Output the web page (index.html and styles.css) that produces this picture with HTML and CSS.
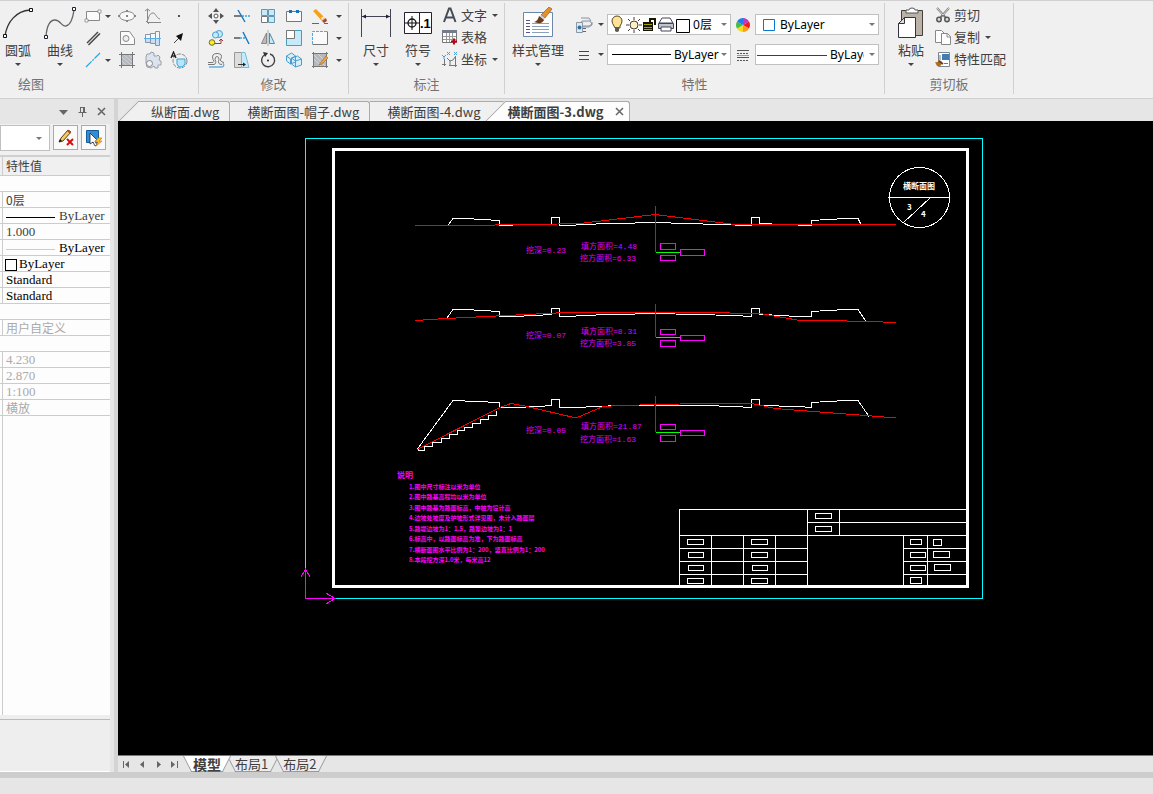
FILE: index.html
```html
<!DOCTYPE html>
<html lang="zh-CN">
<head>
    <meta charset="utf-8">
    <title>横断面图-3.dwg</title>
    <link rel="stylesheet" href="styles.css">
</head>
<body>

<header class="ribbon">
    <section class="group">
        <div class="tools draw">
            <button class="big">
                <svg width="32" height="32"><path d="M3 29C5 15 14 4 28 3" fill="none" stroke="#333" stroke-width="1.3"/><path d="M1.500 27.500h3v3h-3zM27.500 1.500h3v3h-3z" fill="#fff" stroke="#111"/></svg>
                <span>圆弧</span><i class="arrow"></i>
            </button>
            <button class="big">
                <svg width="32" height="32"><path d="M2 29C3 18 6 13 11 13C17 13 17 20 22 19C27 18 29 10 30 3" fill="none" stroke="#666" stroke-width="1.3"/><path d="M.5 28.500h3v3h-3zM28.500 .5h3v3h-3z" fill="#fff" stroke="#223"/></svg>
                <span>曲线</span><i class="arrow"></i>
            </button>
            <div class="icons draw-icons">
                <button class="tool" aria-label="矩形"><svg width="18" height="18"><path d="M2.500 4.500h13v9h-13z" fill="#fafafa" stroke="#888"/><path d="M1 12h3v3H1zM14 3h3v3h-3z" fill="#fff" stroke="#888" stroke-width=".8"/></svg></button>
                <i class="arrow"></i>
                <button class="tool" aria-label="椭圆"><svg width="18" height="18"><ellipse cx="9" cy="9" rx="7.500" ry="4.500" fill="#fafafa" stroke="#888"/><path d="M8 3h2v2H8zM8 8h2v2H8zM8 13h2v2H8zM0 8h2v2H0zM16 8h2v2h-2z" fill="#888"/></svg></button>
                <button class="tool" aria-label="函数"><svg width="18" height="18"><path d="M3.500 2v13.500H17M3 15C5 9 6 6 9 6C12 6 12 11 16 12M1 4l2.500-2L6 4M2 14l3 3" fill="none" stroke="#888"/></svg></button>
                <button class="tool" aria-label="点"><svg width="18" height="18"><path d="M8 8h2v2H8z" fill="#555"/></svg></button>

                <button class="tool" aria-label="双线"><svg width="18" height="18"><path d="M3 14L14 3M4.500 16L16 4.500" stroke="#444" stroke-width="1.400"/><path d="M4 15L15 4" stroke="#ccc"/></svg></button>
                <i></i>
                <button class="tool" aria-label="孔"><svg width="18" height="18"><path d="M2.500 2.500h9l5 7v6h-14z" fill="#fafafa" stroke="#888"/><circle cx="8" cy="9.500" r="3" fill="#eee" stroke="#888"/></svg></button>
                <button class="tool" aria-label="轴"><svg width="18" height="18"><path d="M1.500 5.500h5v8h-5zM6.500 4.500h5v10h-5zM11.500 2.500h4v14h-4z" fill="#c9def0" stroke="#8995a5"/><path d="M2 6h4v3H2zM7 5h4v4H7zM12 3h3v6h-3z" fill="#f4f8fb"/><path d="M0 9.500h17" stroke="#58aee8"/></svg></button>
                <button class="tool" aria-label="箭头"><svg width="18" height="18"><path d="M4 14l6-6" stroke="#444"/><path d="M13 4l-7 3 5 5z" fill="#111"/></svg></button>

                <button class="tool" aria-label="中心线"><svg width="18" height="18"><path d="M2 16L16 2" stroke="#2aa8e0" stroke-width="1.300" stroke-dasharray="8 1 2 1"/></svg></button>
                <i class="arrow"></i>
                <button class="tool" aria-label="剖面线"><svg width="18" height="18"><path d="M3 3h12v9l-3 3H3z" fill="#b5b8bd"/><path d="M3 9l6 6M3 5l10 9M5 3l10 9M10 3l5 5" stroke="#d2d4d8"/><path d="M3.500 1v16M14.500 1v16M1 3.500h16M1 14.500h16" stroke="#777"/></svg></button>
                <button class="tool" aria-label="齿轮"><svg width="18" height="18"><path d="M2 6l1-3 3 0 1-2 3 1 0 3 3 0 1-1 2 2-1 3 2 1 0 4-3 0 0 3-3 0-1-2-3 2-4-1-1-4z" fill="#dde3ee" stroke="#9aa0ab"/><circle cx="5.500" cy="12.500" r="3" fill="#f4f4f4" stroke="#888"/></svg></button>
                <button class="tool" aria-label="局部放大"><svg width="18" height="18"><circle cx="10" cy="10" r="7" fill="none" stroke="#888" stroke-dasharray="4 1"/><path d="M7 8h8v5q-2 4-6 3-3-2-2-8z" fill="#b9e4fa" stroke="#32a7df"/><path d="M1 7l2.500-6L6 7M2 5h3" fill="none" stroke="#222" stroke-width="1.300"/></svg></button>
            </div>
        </div>
        <h2 class="cut">绘图</h2>
    </section>

    <section class="group">
        <div class="tools modify">
            <div class="icons modify-icons">
                <button class="tool" aria-label="移动"><svg width="18" height="18"><path d="M9 1l3 4H6zM9 17l3-4H6zM1 9l4-3v6zM17 9l-4-3v6z" fill="#555"/><circle cx="9" cy="9" r="2" fill="#fff" stroke="#555"/></svg></button>
                <button class="tool" aria-label="修剪"><svg width="18" height="18"><path d="M1 9h7" stroke="#555" stroke-width="1.500"/><path d="M9 9h8" stroke="#32a7df" stroke-width="1.500" stroke-dasharray="2 1"/><path d="M5 3l7 12" stroke="#1873bd" stroke-width="1.400"/></svg></button>
                <button class="tool" aria-label="阵列"><svg width="18" height="18"><path d="M2.500 2.500h6v6h-6zM9.500 2.500h6v6h-6zM9.500 9.500h6v6h-6z" fill="#c5eafa" stroke="#6796ae"/><path d="M2.500 9.500h6v6h-6z" fill="#fff" stroke="#777"/></svg></button>
                <button class="tool" aria-label="打断"><svg width="18" height="18"><path d="M4 4.500H1.500v10h15v-10H14M7 4.500h4" fill="#fafafa" stroke="#777"/><path d="M4 3h3v3H4zM11 3h3v3h-3z" fill="#1873bd"/></svg></button>
                <button class="tool" aria-label="删除"><svg width="18" height="18"><path d="M2 4l3-2 9 9-3 3z" fill="#f5a11b"/><path d="M10 11l3-2 1 1-3 3z" fill="#eee"/><path d="M11 14l4-3 1 3-3 2z" fill="#a34835"/><path d="M1 16.500h7M13 16.500h4" stroke="#666"/></svg></button>
                <i class="arrow"></i>

                <button class="tool" aria-label="复制对象"><svg width="18" height="18"><circle cx="12" cy="5" r="3.500" fill="#c5eafa" stroke="#4b9dd2"/><circle cx="8.500" cy="6" r="3" fill="#c5eafa" stroke="#4b9dd2"/><circle cx="5" cy="13.500" r="2.800" fill="#fff200" stroke="#665"/><path d="M8 14.500h6v-4M12 12l2-2 2 2" fill="none" stroke="#a33"/></svg></button>
                <button class="tool" aria-label="延伸"><svg width="18" height="18"><path d="M1 9h6" stroke="#555" stroke-width="1.500"/><path d="M7 9h5" stroke="#32a7df" stroke-width="1.500" stroke-dasharray="2 1"/><path d="M10 3l6 12" stroke="#1873bd" stroke-width="1.400"/></svg></button>
                <button class="tool" aria-label="镜像"><svg width="18" height="18"><path d="M7.500 4v10.500h-5z" fill="#bbb" stroke="#888"/><path d="M10.500 4v10.500h5z" fill="#c5eafa" stroke="#4b8dac"/><path d="M9 1v16" stroke="#aaa"/></svg></button>
                <button class="tool" aria-label="缩放"><svg width="18" height="18"><path d="M1.500 1.500h15v15h-15z" fill="#c5eafa" stroke="#4b9dba"/><path d="M1.500 1.500h8v8h-8z" fill="#fff" stroke="#777"/></svg></button>
                <button class="tool" aria-label="选择框"><svg width="18" height="18"><path d="M1.500 2.500h15v13h-15z" fill="#fafafa"/><path d="M16.500 2.500v13h-15" fill="none" stroke="#777"/><path d="M1.500 15V2.500H16" fill="none" stroke="#48afe3" stroke-dasharray="3 1"/></svg></button>
                <i class="arrow"></i>

                <button class="tool" aria-label="偏移"><svg width="18" height="18"><path d="M1 11.500h5q2-1 0-3-2-6 4-6t4 5q-2 3 3 4" fill="none" stroke="#777"/><path d="M1 13.500h6q3-1 1-5 0-3 2-3t2 3q-2 5 3 5" fill="none" stroke="#777"/><path d="M2 16h13q3-1 1-4" fill="none" stroke="#60aee0" stroke-width="1.300"/></svg></button>
                <button class="tool" aria-label="拉伸"><svg width="18" height="18"><path d="M1.500 1.500h7v15h-7z" fill="#ddd" stroke="#999"/><path d="M8.500 1.500H12l4 15H8.500z" fill="#c5eafa" stroke="#72bcdf"/><path d="M5 13.500h7" stroke="#333"/><path d="M10 11.500l3 2-3 2z" fill="#222"/></svg></button>
                <button class="tool" aria-label="旋转"><svg width="18" height="18"><path d="M11 3a6.500 6.500 0 1 1-5 .5" fill="none" stroke="#444" stroke-width="1.400"/><path d="M4 1l5 1-3 4z" fill="#333"/><circle cx="9" cy="9.500" r="1" fill="#222"/></svg></button>
                <button class="tool" aria-label="实体"><svg width="18" height="18"><path d="M1.500 5l5-3 4 3v6l-5 2-4-3zM6.500 7l6-2 4 3v6l-6 2-4-3z" fill="#d7effa" stroke="#4a9dcc"/><path d="M1.500 5l4 3 5-3M5.500 8v5M6.500 7l4 3 6-2M10.500 10v6" fill="none" stroke="#4a9dcc"/></svg></button>
                <button class="tool" aria-label="编辑剖面线"><svg width="18" height="18"><path d="M3 3h12v12H3z" fill="#b5b8bd"/><path d="M3 8l7 7M3 4l11 11M7 3l8 8" stroke="#d2d4d8"/><path d="M2.500 1v16M15.500 1v16M1 2.500h16M1 15.500h16" stroke="#777"/><path d="M8 14l2-3 5-6 2 2-6 6z" fill="#e9a34a" stroke="#a96d26" stroke-width=".7"/></svg></button>
                <i class="arrow"></i>
            </div>
        </div>
        <h2>修改</h2>
    </section>

    <section class="group">
        <div class="tools annotate">
            <button class="big wide">
                <svg width="32" height="32"><path d="M1.500 2v28M30.500 2v28M2 9.500h28" stroke="#445" fill="none"/><path d="M2 9.500l4-2v4zM30 9.500l-4-2v4z" fill="#223"/></svg>
                <span>尺寸</span><i class="arrow"></i>
            </button>
            <button class="big wide">
                <svg width="32" height="32"><path d="M2.500 5.500h27v21h-27zM17.500 5v22" fill="#fff" stroke="#223"/><circle cx="10" cy="16" r="4" fill="none" stroke="#111" stroke-width="1.300"/><path d="M3 16h14M10 9v14" stroke="#111"/><text x="18" y="21" class="symbol-text">.1</text></svg>
                <span>符号</span><i class="arrow"></i>
            </button>
            <div class="list">
                <button class="line"><svg width="16" height="16"><path d="M2 15L7 1.500h1.500l5 13.500M4 10.500h8" fill="none" stroke="#444c58" stroke-width="2"/></svg>文字<i class="arrow"></i></button>
                <button class="line"><svg width="16" height="16"><path d="M.5 1.500h14v12H.5z" fill="#fff" stroke="#777"/><path d="M0 1h15v3H0z" fill="#747c89"/><path d="M1 7.500h13M1 10.500h13M4.500 4v9M7.500 4v9M10.500 4v9" stroke="#999"/><path d="M9 12.500h6M12 9.500v6" stroke="#c00018" stroke-width="2"/></svg>表格</button>
                <button class="line"><svg width="16" height="16"><path d="M2.500 8v7M0 13.500h4M7 14.500h8M13.500 5v11M5 7l3 3 3-1 2-3M8 9v6" fill="none" stroke="#777"/><path d="M0 4l2 2 2-2M2 6v2M5 1l3 3M8 1L5 4M12 1l3 3M15 1l-3 3" fill="none" stroke="#4e9bda"/></svg>坐标<i class="arrow"></i></button>
            </div>
        </div>
        <h2>标注</h2>
    </section>

    <section class="group">
        <div class="tools props">
            <button class="big style-manager">
                <svg width="32" height="32"><path d="M1.500 5.500h29v24h-29z" fill="#fff" stroke="#6c87a7"/><path d="M4 13.500h4M4 16.500h4M4 19.500h4M4 22.500h4M4 25.500h4" stroke="#558"/><path d="M10 16.500h17M10 19.500h17M10 22.500h17M10 25.500h17" stroke="#8aa1be"/><path d="M27 0l3 2-7 9-4-3z" fill="#e6902a" stroke="#9b5b16" stroke-width=".7"/><path d="M19 8l4 4-2 2-4-4z" fill="#ccd"/><path d="M17 9l5 4q-2 5-10 2 4-1 5-6z" fill="#6b3d1c"/></svg>
                <span>样式管理</span><i class="arrow"></i>
            </button>
            <div class="prop-grid">
                <button class="tool" aria-label="图层"><svg width="18" height="18"><path d="M7 5h8l2 3-3 2H5zM6 2h8l2 3M5 8v3h9l3-2V6" fill="#e7e9ed" stroke="#8993a1"/><path d="M1.500 6.500h6v10h-6z" fill="#dcebf5" stroke="#8a96a3"/><circle cx="4.500" cy="11.500" r="2" fill="#32709e"/><path d="M8 12.500h3M8 15.500h3" stroke="#667"/></svg></button>
                <i class="arrow"></i>
                <div class="field">
                    <select class="layer" aria-label="当前图层"><option>0层</option></select>
                    <svg class="mark" width="80" height="19">
                        <path d="M6 11Q4 8 4 6a5 5 0 0 1 10 0q0 2-2 5v2H7z" fill="#ffe394" stroke="#554628"/><path d="M7 12h4v4q-2 2-4 0z" fill="#5a5a55"/>
                        <circle cx="26" cy="10" r="4" fill="#ffefc4" stroke="#443e36"/><path d="M26 2v3M26 15v3M18 10h3M31 10h3M20 4l2 2M30 14l2 2M32 4l-2 2M20 16l2-2" stroke="#443e36"/>
                        <path d="M35 7h10v9H35z" fill="#151500"/><path d="M36 9.500h8M36 12.500h8M36 14.500h8" stroke="#a8a300"/><path d="M42 8V4h5v6" fill="none" stroke="#151500" stroke-width="2"/>
                        <path d="M54 3h8l3 5H51z" fill="#fff" stroke="#445"/><path d="M50.500 8.500h15v5h-15z" fill="#c0c4ce" stroke="#445"/><path d="M53 12h10v4H53z" fill="#fff" stroke="#445"/>
                        <path d="M68.500 4.500h13v13h-13z" fill="#fff" stroke="#000"/>
                    </svg>
                    <i class="arrow"></i>
                </div>
                <button class="tool" aria-label="颜色"><svg width="18" height="18"><path d="M9 9V2a7 7 0 0 1 6 3.500z" fill="#c237c6"/><path d="M9 9l6-3.500a7 7 0 0 1 0 7z" fill="#ed1c24"/><path d="M9 9l6 3.500A7 7 0 0 1 9 16z" fill="#ff9a1f"/><path d="M9 9v7a7 7 0 0 1-6-3.500z" fill="#f5dc1a"/><path d="M9 9l-6 3.500a7 7 0 0 1 0-7z" fill="#40bd49"/><path d="M9 9L3 5.500A7 7 0 0 1 9 2z" fill="#247bea"/></svg></button>
                <div class="field">
                    <select class="color" aria-label="颜色"><option>ByLayer</option></select>
                    <svg class="mark" width="20" height="19"><path d="M7.500 4.500h11v11h-11z" fill="#fff" stroke="#0878d0"/></svg>
                    <i class="arrow"></i>
                </div>

                <button class="tool" aria-label="线宽"><svg width="18" height="18"><path d="M4 5.500h10M4 9.500h10M4 13.500h10" stroke="#445"/></svg></button>
                <i class="arrow"></i>
                <div class="field">
                    <select class="weight" aria-label="线宽"><option>ByLayer</option></select>
                    <svg class="mark" width="64" height="19"><path d="M4 9.500h59" stroke="#000"/></svg>
                    <i class="arrow"></i>
                </div>
                <button class="tool" aria-label="线型"><svg width="18" height="18"><path d="M3 4.500h12M3 11.500h12" stroke="#555"/><path d="M3 7.500h12M3 14.500h12" stroke="#555" stroke-dasharray="2 1"/><path d="M3 9.500h12" stroke="#999"/></svg></button>
                <div class="field">
                    <select class="linetype" aria-label="线型"><option>ByLayer</option></select>
                    <svg class="mark" width="72" height="19"><path d="M1 10.500h70" stroke="#d00000"/></svg>
                    <i class="arrow"></i>
                </div>
            </div>
        </div>
        <h2>特性</h2>
    </section>

    <section class="group">
        <div class="tools clipboard">
            <button class="big">
                <svg width="32" height="32"><path d="M6.500 3.500h21v25h-21z" fill="#bbb2a7" stroke="#433f3b"/><path d="M11 5V3h3q0-2 3-2t3 2h3v3H11z" fill="#fff" stroke="#555"/><path d="M9.500 10.500h11v20h-17v-14z" fill="#fff" stroke="#334"/><path d="M3.500 16.500h6v-6z" fill="#ddd" stroke="#334"/></svg>
                <span>粘贴</span><i class="arrow"></i>
            </button>
            <div class="list">
                <button class="line"><svg width="16" height="16"><path d="M2 1l9 10M14 1L5 11" stroke="#777" stroke-width="2"/><path d="M2 1l6 7M14 1L8 8" stroke="#ddd"/><circle cx="4" cy="12.500" r="2.200" fill="#ddd" stroke="#555" stroke-width="1.500"/><circle cx="12" cy="12.500" r="2.200" fill="#ddd" stroke="#555" stroke-width="1.500"/></svg>剪切</button>
                <button class="line"><svg width="16" height="16"><path d="M.5 1.500h6l3 3v9h-9z" fill="#fff" stroke="#888"/><path d="M6.500 4.500h6l3 3v8h-9z" fill="#fff" stroke="#888"/><path d="M12 4.500v3.500h3.500" fill="none" stroke="#888"/></svg>复制<i class="arrow"></i></button>
                <button class="line"><svg width="16" height="16"><path d="M3.500 1.500h11v14h-11z" fill="#fff" stroke="#7a8793"/><path d="M7 3h7v6H7z" fill="#447bb1"/><path d="M9 12.500h4M5 4v5" stroke="#777"/><path d="M0 11q3 1 4-2l3 2q0 5-5 4z" fill="#b46a19"/><path d="M4 10l4 3" stroke="#6a432a" stroke-width="2"/></svg>特性匹配</button>
            </div>
        </div>
        <h2>剪切板</h2>
    </section>
</header>

<main class="work">
    <aside class="panel">
        <div class="panel-title">
            <button class="mini" aria-label="菜单"><svg width="11" height="11"><path d="M1 4h9L5.500 9z" fill="#666"/></svg></button>
            <button class="mini" aria-label="固定"><svg width="11" height="11"><path d="M3.500 1v5M7.500 1v5M3 1.500h5M1.500 6.500h8M5.500 7v4M6.500 1v5" stroke="#666" fill="none"/></svg></button>
            <button class="mini" aria-label="关闭"><svg width="11" height="11"><path d="M2 2l7 7M9 2l-7 7" stroke="#666" stroke-width="1.600"/></svg></button>
        </div>
        <div class="panel-bar">
            <div class="picker"><select aria-label="选择对象"><option></option></select><i class="arrow"></i></div>
            <button class="square" aria-label="清除选择"><svg width="18" height="18"><path d="M2 13l2-4 7-8 3 2-8 9z" fill="#f5ca55" stroke="#554020"/><path d="M10 2l2-1 2 2-1 2z" fill="#ae5432"/><path d="M2 13l1-3 2 2z" fill="#111"/><path d="M10 10l6 6M16 10l-6 6" stroke="#d31010" stroke-width="2"/></svg></button>
            <button class="square" aria-label="快速选择"><svg width="18" height="18"><path d="M1.500 1.500h12v12h-12z" fill="#338dd5" stroke="#135a9a"/><path d="M5 4v11l3-2 2 4 2-1-2-4h3z" fill="#fff" stroke="#222" stroke-width=".8"/><path d="M13 9l-3 4h3l-2 4 6-5h-3l3-3z" fill="#ffc126" stroke="#d47810" stroke-width=".7"/></svg></button>
        </div>
        <table class="values">
            <thead><tr><th class="edge"></th><th>特性值</th></tr></thead>
            <tbody>
                <tr><td colspan="2"></td></tr>
                <tr><td class="edge"></td><td class="cn">0层</td></tr>
                <tr><td class="edge"></td><td><span class="sample"></span>ByLayer</td></tr>
                <tr><td class="edge"></td><td>1.000</td></tr>
                <tr class="dark"><td class="edge"></td><td><span class="sample pale"></span>ByLayer</td></tr>
                <tr class="dark"><td class="edge"></td><td class="tight"><span class="swatch"></span>ByLayer</td></tr>
                <tr class="dark"><td class="edge"></td><td>Standard</td></tr>
                <tr class="dark"><td class="edge"></td><td>Standard</td></tr>
                <tr><td colspan="2"></td></tr>
                <tr class="off"><td class="edge"></td><td class="cn">用户自定义</td></tr>
                <tr><td colspan="2"></td></tr>
                <tr class="off"><td class="edge"></td><td>4.230</td></tr>
                <tr class="off"><td class="edge"></td><td>2.870</td></tr>
                <tr class="off"><td class="edge"></td><td>1:100</td></tr>
                <tr class="off"><td class="edge"></td><td class="cn">横放</td></tr>
            </tbody>
        </table>
        <div class="rest"></div>
        <div class="hint"></div>
    </aside>

    <div class="editor">
        <nav class="files">
            <button class="file first">纵断面.dwg</button>
            <button class="file second">横断面图-帽子.dwg</button>
            <button class="file third">横断面图-4.dwg</button>
            <button class="file active">横断面图-3.dwg<svg width="9" height="9"><path d="M1 1l7 7M8 1L1 8" stroke="#666" stroke-width="1.500"/></svg></button>
        </nav>

        <svg class="canvas">
            <g transform="translate(-118 -121)">
                <!-- sheet border and frame -->
                <path class="cyan" d="M305.500 138.500h677v460h-677z"/>
                <path class="frame" d="M333.500 149.500h634v437h-634z"/>
                <path class="magenta" d="M335 598.500h-29.500V569M301 577l4.500-8 4.500 8M326 593l9 5.500-9 5.500"/>

                <!-- sheet number -->
                <circle class="white" cx="919.500" cy="197.500" r="30"/>
                <path class="white" d="M888 197.500h62M930 198l-27 25"/>
                <g class="stamp">
                    <text x="903" y="189">横断面图</text>
                    <text x="907" y="210">3</text>
                    <text x="921" y="217">4</text>
                </g>

                <!-- section 1 -->
                <path class="white" d="M448 225l5-6.500h12l34 2v5h14M536 224.500h3M551 223.500v-6h8v8h16l2-1 78-2 80 2.500 16 .5v-8h8v6l13 .5M798 225.500h13v-5l35-2h12l3 6"/>
                <path class="red" d="M415 225.500h41l80-1 44-1 75-9 80 10h161M655.500 206v46"/>
                <path class="green" d="M656 252.500h25"/>
                <path class="magenta" d="M660.500 243.500h15v6h-15zM680.500 249.500h24v6h-24zM660.500 255.500h15v5h-15z"/>

                <!-- section 2 -->
                <path class="white" d="M447 318l6-8.500h12l34 2v5h14l23-1 15-1v-6h8v8h16l2-1 78-2 80 2 16 1v-8h8v6l13 .5 26 1.500h13v-5l35-2h12l8 12"/>
                <path class="red" d="M415 320.500l31-2 60-3 60-3h134l60 1 40 7h23l47 1 26 1M655.500 304v33"/>
                <path class="green" d="M656 337.500h25"/>
                <path class="magenta" d="M660.500 329.500h15v5h-15zM680.500 335.500h24v5h-24zM660.500 340.500h15v6h-15z"/>

                <!-- section 3 -->
                <path class="white" d="M417 449.500l36-49 46 2v5h14l26-1 12-1v-6h8v8h16l33-1.500 47-1 48 .5 32 1 16 1v-8h8v6l39 1 13 1v-5l35-2h12l11 16"/>
                <path class="white" d="M417 449.500l3 1h4v-4h8v-4h9v-4h8v-4h8v-4h7v-3h8v-4h8v-4h8v-4h8v-5"/>
                <path class="red" d="M417 449.500l83-42 11-4 14 2.500 51 12 27-11.500 17-1 80-2h52l23 5 45 3.500 46 3.500 30 2.500M655.500 396v36"/>
                <path class="green" d="M656 432.500h25"/>
                <path class="magenta" d="M660.500 424.500h15v5h-15zM680.500 430.500h24v5h-24zM660.500 435.500h15v6h-15z"/>

                <g class="area">
                    <text x="526" y="253">挖深=0.23</text>
                    <text x="581" y="249">填方面积=4.48</text>
                    <text x="580" y="261">挖方面积=6.33</text>
                    <text x="526" y="338">挖深=0.07</text>
                    <text x="581" y="334">填方面积=8.31</text>
                    <text x="580" y="346">挖方面积=3.85</text>
                    <text x="526" y="433">挖深=0.05</text>
                    <text x="581" y="429">填方面积=21.87</text>
                    <text x="580" y="442">挖方面积=1.63</text>
                </g>

                <text class="note-head" x="397" y="478">说明</text>
                <g class="note">
                    <text x="409" y="489">1.图中尺寸标注以米为单位</text>
                    <text x="409" y="499">2.图中路基高程均以米为单位</text>
                    <text x="409" y="510">3.图中路基为路面标高，中桩为设计高</text>
                    <text x="409" y="520">4.边坡处坡度及护坡形式详见图，未计入路面层</text>
                    <text x="409" y="531">5.路堤边坡为1：1.5，路堑边坡为1：1</text>
                    <text x="409" y="541">6.标高中，以路面标高为准，下为路面标高</text>
                    <text x="409" y="552">7.横断面图水平比例为1：200，竖直比例为1：200</text>
                    <text x="409" y="562">8.本段挖方深1.0米，每米高12</text>
                </g>

                <!-- title block -->
                <path class="white" d="M679.500 586v-76.500H967M807.500 509v77M839.500 509v26M807 522.500h160M679 535.500h288M679 548.500h128M679 561.500h128M679 574.500h128M903 548.500h64M903 561.500h64M903 574.500h64M711.500 535v51M743.500 535v51M775.500 535v51M903.500 535v51M927.500 535v51"/>
                <path class="white" d="M815.500 513.500h16v5h-16zM815.500 526.500h16v5h-16zM687.500 539.500h16v5h-16zM688.500 552.500h15v5h-15zM688.500 565.500h15v5h-15zM687.500 578.500h16v5h-16zM751.500 539.500h16v5h-16zM751.500 552.500h16v5h-16zM752.500 565.500h15v5h-15zM751.500 578.500h16v5h-16zM910.500 539.500h11v5h-11zM910.500 552.500h15v5h-15zM910.500 565.500h15v5h-15zM910.500 577.500h11v6h-11zM933.500 539.500h8v6h-8zM933.500 551.500h16v6h-16zM934.500 564.500h16v6h-16z"/>
            </g>
        </svg>

        <nav class="layouts">
            <button class="mini" aria-label="第一个"><svg width="9" height="9"><path d="M1.500 1v7" stroke="#666"/><path d="M7 1v7L3 4.500z" fill="#666"/></svg></button>
            <button class="mini" aria-label="上一个"><svg width="9" height="9"><path d="M6 1v7L2 4.500z" fill="#666"/></svg></button>
            <button class="mini" aria-label="下一个"><svg width="9" height="9"><path d="M3 1v7l4-3.500z" fill="#666"/></svg></button>
            <button class="mini" aria-label="最后一个"><svg width="9" height="9"><path d="M1 1v7l4-3.500z" fill="#666"/><path d="M7.500 1v7" stroke="#666"/></svg></button>
            <button class="sheet current"><span>模型</span></button>
            <button class="sheet"><span>布局1</span></button>
            <button class="sheet"><span>布局2</span></button>
        </nav>
    </div>
</main>

<footer class="status"></footer>

</body>
</html>
```

FILE: styles.css
```css
* {
    box-sizing: border-box;
}

body {
    display: flex;
    flex-direction: column;
    height: 100vh;
    margin: 0;
    overflow: hidden;
    background-color: #e6e6e6;
    color: #404040;
    font-family: "Noto Sans CJK SC", sans-serif;
    font-size: 13px;
    line-height: 18px;
}

button {
    padding: 0;
    border: 0;
    background: none;
    color: inherit;
    font: inherit;
}

svg {
    display: block;
    flex: none;
}

.arrow {
    width: 0;
    height: 0;
    border: 3px solid transparent;
    border-top-color: #444;
    border-bottom: 0;
}

/* ribbon */
.ribbon {
    display: flex;
    flex: none;
    height: 99px;
    padding: 2px 0 4px;
    border-top: 1px solid #d0d0d0;
    border-bottom: 1px solid #d0d0d0;
    background-color: #f0f0f0;
}

.group {
    display: flex;
    flex-direction: column;
    justify-content: space-between;
    border-right: 1px solid #d0d0d0;
}

.group h2 {
    margin: 0;
    color: #737373;
    font-size: 13px;
    font-weight: normal;
    line-height: 20px;
    text-align: center;
}

.group h2.cut {
    padding-left: 18px;
    text-align: left;
}

.tools {
    display: flex;
}

.draw {
    gap: 6px;
    padding-right: 6px;
}

.modify {
    padding: 0 4px;
}

.annotate {
    padding: 0 6px;
}

.props {
    gap: 8px;
    padding: 0 5px 0 6px;
}

.clipboard {
    gap: 3px;
    padding: 0 7px 0 8px;
}

.big {
    display: flex;
    flex-direction: column;
    align-items: center;
    width: 36px;
    padding-top: 4px;
}

.big span {
    padding: 2px 0 4px;
    white-space: nowrap;
}

.wide {
    width: 42px;
}

.style-manager {
    width: 54px;
}

.symbol-text {
    fill: #000;
    font: bold 13px "Liberation Sans", sans-serif;
}

.icons {
    display: grid;
    grid-auto-rows: 22px;
    align-items: center;
    justify-items: center;
    padding-top: 2px;
}

.draw-icons {
    grid-template-columns: 18px 12px 26px 26px 26px;
}

.modify-icons {
    grid-template-columns: repeat(5, 26px) 11px;
}

.list {
    display: flex;
    flex-direction: column;
    padding: 1px 0 0 3px;
}

.line {
    display: flex;
    align-items: center;
    gap: 3px;
    height: 22px;
    white-space: nowrap;
}

.line .arrow {
    margin-left: 2px;
}

.prop-grid {
    display: grid;
    grid-template-columns: 22px 12px 124px 24px 124px;
    grid-auto-rows: 21px;
    row-gap: 9px;
    align-items: center;
    justify-items: center;
    padding-top: 11px;
}

.field,
.picker {
    position: relative;
    width: 100%;
    height: 21px;
}

.field select,
.picker select {
    width: 100%;
    height: 100%;
    padding: 0;
    border: 1px solid #c0c0c0;
    border-radius: 0;
    outline: 0;
    background-color: #fff;
    color: #000;
    font: 12px "Noto Sans", "Noto Sans CJK SC", sans-serif;
    appearance: none;
}

.field .mark {
    position: absolute;
    top: 1px;
    left: 1px;
    overflow: visible;
    pointer-events: none;
}

.field .arrow,
.picker .arrow {
    position: absolute;
    top: 9px;
    right: 4px;
    border-top-color: #777;
}

.field .layer {
    padding-left: 85px;
}

.field .color {
    padding-left: 24px;
}

.field .weight {
    padding-left: 66px;
}

.field .linetype {
    padding: 0 14px 0 74px;
}

/* properties panel */
.work {
    display: flex;
    flex: 1;
    min-height: 0;
}

.panel {
    display: flex;
    flex: none;
    flex-direction: column;
    width: 118px;
    padding-right: 4px;
    border-right: 4px solid #d4d4d4;
}

.panel-title {
    display: flex;
    align-items: center;
    justify-content: flex-end;
    gap: 8px;
    height: 25px;
    padding-right: 3px;
}

.mini {
    display: flex;
    align-items: center;
    justify-content: center;
}

.panel-bar {
    display: flex;
    gap: 3px;
    height: 32px;
    padding: 1px 4px 0 0;
    border-bottom: 1px solid #d0d0d0;
    background-color: #f0f0f0;
}

.picker {
    height: 26px;
}

.picker .arrow {
    top: 12px;
    right: 8px;
}

.square {
    display: flex;
    flex: none;
    align-items: center;
    justify-content: center;
    width: 25px;
    height: 25px;
    border: 1px solid #aaa;
    background-color: #fafafa;
}

.values {
    width: 100%;
    table-layout: fixed;
    border-collapse: separate;
    border-spacing: 0;
    background-color: #fdfdfd;
    font: 13px "Liberation Serif", "Noto Sans CJK SC", serif;
}

.values th {
    height: 20px;
    padding: 0 0 0 3px;
    border-top: 1px solid #d0d0d0;
    border-bottom: 1px solid #ccc;
    background-color: #f0f0f0;
    font: 12px/18px "Noto Sans CJK SC", sans-serif;
    text-align: left;
}

.values td {
    height: 16px;
    padding: 0 0 0 3px;
    overflow: hidden;
    border-bottom: 1px solid #ccc;
    line-height: 15px;
    white-space: nowrap;
}

.values .edge {
    width: 3px;
    padding: 0;
    border-right: 1px solid #ccc;
}

.values .cn {
    font: 12px/15px "Noto Sans CJK SC", sans-serif;
}

.values .tight {
    padding-left: 2px;
}

.dark {
    color: #000;
}

.off {
    color: #aaa;
}

.sample {
    display: inline-block;
    width: 49px;
    margin-right: 4px;
    border-top: 1px solid #000;
    vertical-align: middle;
}

.pale {
    border-color: #ccc;
}

.swatch {
    display: inline-block;
    width: 12px;
    height: 12px;
    margin-right: 2px;
    border: 1px solid #000;
    vertical-align: middle;
}

.rest {
    flex: 1;
    margin-left: 2px;
    border-left: 1px solid #ccc;
    background-color: #fdfdfd;
    box-shadow: -2px 0 #fdfdfd;
}

.hint {
    height: 57px;
    border-top: 4px solid #eee;
    border-bottom: 1px solid #fff;
    background-color: #eee;
    box-shadow: inset 0 1px #bbb;
}

/* drawing area */
.editor {
    display: flex;
    flex: 1;
    flex-direction: column;
    min-width: 0;
}

.files {
    position: relative;
    z-index: 0;
    display: flex;
    align-items: flex-end;
    height: 22px;
    overflow: hidden;
}

.file {
    position: relative;
    display: flex;
    align-items: center;
    height: 20px;
    border-top: 1px solid #aaa;
    border-right: 1px solid #aaa;
    border-top-right-radius: 3px;
    background-color: #f0f0f0;
    white-space: nowrap;
}

.first {
    margin-left: 20px;
    padding: 0 10px 0 13px;
}

.second {
    padding: 0 10px 0 17px;
}

.third {
    padding: 0 24px 0 17px;
    border-right: 0;
}

.first::before,
.active::before {
    content: "";
    position: absolute;
    z-index: -1;
    top: -1px;
    left: -10px;
    width: 24px;
    height: 20px;
    border-top: 1px solid #aaa;
    border-left: 1px solid #999;
    background-color: inherit;
    transform: skewX(-45deg);
}

.active {
    z-index: 1;
    gap: 11px;
    padding: 0 5px 0 3px;
    background-color: #fdfdfd;
    font-weight: bold;
}

.canvas {
    flex: 1;
    width: 100%;
    min-height: 0;
    background-color: #000;
    shape-rendering: crispEdges;
}

.canvas path,
.canvas circle {
    fill: none;
}

.cyan {
    stroke: #0ff;
}

.white {
    stroke: #fff;
}

.red {
    stroke: #f00;
}

.green {
    stroke: #0f0;
}

.magenta {
    stroke: #f0f;
}

.frame {
    stroke: #fff;
    stroke-width: 3px;
}

.stamp {
    fill: #fff;
    font: bold 8px "Noto Sans CJK SC", sans-serif;
}

.area {
    fill: #e000f8;
    font: 8px "Liberation Mono", "Noto Sans CJK SC", monospace;
}

.note-head {
    fill: #f0f;
    font: bold 8px "Noto Sans CJK SC", sans-serif;
}

.note {
    fill: #f0f;
    font: bold 6px "Noto Sans CJK SC", sans-serif;
}

/* layout tabs */
.layouts {
    display: flex;
    align-items: center;
    height: 17px;
    border-top: 1px solid #777;
}

.layouts .mini {
    width: 16px;
}

.sheet {
    position: relative;
    z-index: 0;
    height: 16px;
    margin-left: -4px;
    padding: 0 11px 0 8px;
    line-height: 14px;
}

.sheet::before,
.sheet::after {
    content: "";
    position: absolute;
    z-index: -1;
    top: 0;
    bottom: 0;
    width: 50%;
    border-bottom: 1px solid #999;
    background-color: #ececec;
    transform-origin: top;
}

.sheet::before {
    left: 0;
    border-left: 1px solid #999;
    transform: skewX(27deg);
}

.sheet::after {
    right: 0;
    border-right: 1px solid #999;
    transform: skewX(-27deg);
}

.sheet.current {
    z-index: 1;
    margin-left: 1px;
    padding: 0 10px;
    font-size: 14px;
    font-weight: bold;
}

.current::before,
.current::after {
    background-color: #fff;
}

.status {
    flex: none;
    height: 22px;
    border-top: 6px solid #cdcdcd;
    background-color: #e6e6e6;
}
```
